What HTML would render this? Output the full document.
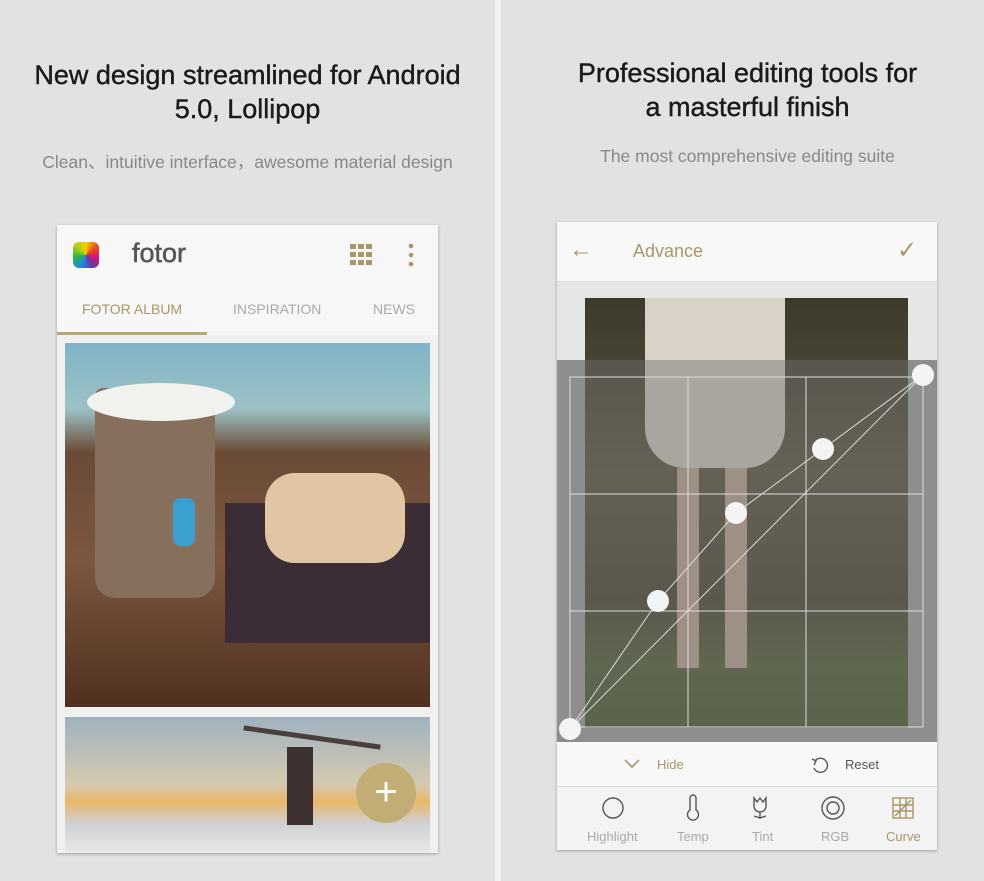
<!DOCTYPE html>
<html><head><style>
body{margin:0;width:984px;height:881px;background:#e2e2e2;font-family:"Liberation Sans",sans-serif;position:relative;overflow:hidden}
.a{position:absolute}
h1{margin:0;font-size:27px;font-weight:normal;color:#1a1a1a;text-align:center;line-height:34px;-webkit-text-stroke:.4px #1a1a1a}
.sub{font-size:17.5px;color:#888;text-align:center}
</style></head><body>
<div class="a" style="left:495px;top:0;width:6px;height:881px;background:#f4f4f4"></div>
<h1 class="a" style="left:0;width:495px;top:58px">New design streamlined for Android<br>5.0, Lollipop</h1>
<div class="a sub" style="left:0;width:495px;top:149px">Clean、intuitive interface，awesome material design</div>
<h1 class="a" style="left:500px;width:495px;top:56px">Professional editing tools for<br>a masterful finish</h1>
<div class="a sub" style="left:500px;width:495px;top:146px">The most comprehensive editing suite</div>

<!-- left phone -->
<div class="a" style="left:57px;top:225px;width:381px;height:628px;background:#f0f0f0;box-shadow:0 1px 3px rgba(0,0,0,.3)">
 <div class="a" style="left:0;top:0;width:381px;height:110px;background:#f7f7f7"></div>
 <div class="a" style="left:16px;top:17px;width:26px;height:26px;border-radius:6px;background:conic-gradient(#f5d000,#e94b1c,#d9127d,#5b3fa6,#1f8ae0,#25b34a,#a7cf1b,#f5d000)"></div>
 <div class="a" style="left:75px;top:13px;font-size:27px;color:#555;-webkit-text-stroke:.5px #555">fotor</div>
 <svg class="a" style="left:293px;top:19px" width="24" height="22"><g fill="#a99668"><rect x="0" y="0" width="6" height="5"/><rect x="8" y="0" width="6" height="5"/><rect x="16" y="0" width="6" height="5"/><rect x="0" y="8" width="6" height="5"/><rect x="8" y="8" width="6" height="5"/><rect x="16" y="8" width="6" height="5"/><rect x="0" y="16" width="6" height="5"/><rect x="8" y="16" width="6" height="5"/><rect x="16" y="16" width="6" height="5"/></g></svg>
 <svg class="a" style="left:351px;top:18px" width="6" height="24"><g fill="#a99668"><circle cx="3" cy="3" r="2.3"/><circle cx="3" cy="12" r="2.3"/><circle cx="3" cy="21" r="2.3"/></g></svg>
 <div class="a" style="left:25px;top:76px;font-size:14px;color:#a99668">FOTOR ALBUM</div>
 <div class="a" style="left:176px;top:76px;font-size:14px;color:#aaa">INSPIRATION</div>
 <div class="a" style="left:316px;top:76px;font-size:14px;color:#aaa">NEWS</div>
 <div class="a" style="left:0;top:107px;width:150px;height:3px;background:#b8a677"></div>
 <div class="a" style="left:8px;top:118px;width:365px;height:364px;background:linear-gradient(180deg,#7fb4c6 0%,#9cc2c6 18%,#6b4b37 30%,#7b573e 60%,#4f3020 100%)">
  <div class="a" style="left:30px;top:45px;width:120px;height:210px;background:#86705d;border-radius:8px 8px 20px 20px"></div>
  <div class="a" style="left:22px;top:40px;width:148px;height:38px;background:#f1f1ee;border-radius:50%"></div>
  <div class="a" style="left:108px;top:155px;width:22px;height:48px;background:#3aa0cf;border-radius:8px"></div>
  <div class="a" style="left:160px;top:160px;width:205px;height:140px;background:#3c2c35"></div>
  <div class="a" style="left:200px;top:130px;width:140px;height:90px;background:#e0c6a2;border-radius:30px"></div>
 </div>
 <div class="a" style="left:8px;top:492px;width:365px;height:136px;background:linear-gradient(180deg,#9fb2c0 0%,#d6c9b0 50%,#e9b768 62%,#cfd0d2 78%,#e8e8e8 100%)">
  <div class="a" style="left:222px;top:30px;width:26px;height:78px;background:#3c3130"></div>
  <div class="a" style="left:178px;top:18px;width:138px;height:5px;background:#4a3f3b;transform:rotate(8deg)"></div>
  <div class="a" style="left:291px;top:46px;width:60px;height:60px;border-radius:50%;background:#c2ad75;color:#fff;font-size:40px;line-height:58px;text-align:center">+</div>
 </div>
</div>

<!-- right phone -->
<div class="a" style="left:557px;top:222px;width:380px;height:628px;background:#f3f3f3;box-shadow:0 1px 3px rgba(0,0,0,.3)">
 <div class="a" style="left:0;top:0;width:380px;height:59px;background:#f8f8f8;border-bottom:1px solid #ddd"></div>
 <div class="a" style="left:12px;top:14px;font-size:24px;color:#a99668">←</div>
 <div class="a" style="left:76px;top:19px;font-size:18px;color:#a99668">Advance</div>
 <div class="a" style="left:340px;top:14px;font-size:24px;color:#a99668">✓</div>
 <div class="a" style="left:0;top:60px;width:380px;height:460px;background:#e6e6e6"></div>
 <div class="a" style="left:28px;top:76px;width:323px;height:430px;background:linear-gradient(180deg,#3d3a2c 0%,#5c5640 40%,#4a4631 70%,#536238 85%,#4a5a30 100%)">
  <div class="a" style="left:60px;top:0;width:140px;height:170px;background:#d9d3c7;border-radius:0 0 40px 40px"></div>
  <div class="a" style="left:92px;top:170px;width:22px;height:200px;background:#c7ab98"></div>
  <div class="a" style="left:140px;top:170px;width:22px;height:200px;background:#c7ab98"></div>
 </div>
 <div class="a" style="left:0;top:138px;width:380px;height:382px;background:rgba(110,110,110,.45)"></div>
 <div class="a" style="left:0;top:138px;width:28px;height:382px;background:#8e8e8e"></div>
 <div class="a" style="left:351px;top:138px;width:29px;height:382px;background:#8e8e8e"></div>
 <div class="a" style="left:0;top:506px;width:380px;height:14px;background:#8e8e8e"></div>
 <svg class="a" style="left:0;top:138px" width="380" height="382">
  <g stroke="#ddd" stroke-width="1" fill="none">
   <rect x="13" y="17" width="353" height="350"/>
   <line x1="131" y1="17" x2="131" y2="367"/><line x1="249" y1="17" x2="249" y2="367"/>
   <line x1="13" y1="134" x2="366" y2="134"/><line x1="13" y1="251" x2="366" y2="251"/>
   <polyline points="13,369 101,241 179,153 266,89 366,15"/>
   <line x1="13" y1="369" x2="366" y2="15"/>
  </g>
  <g fill="#f4f4f4"><circle cx="13" cy="369" r="11"/><circle cx="101" cy="241" r="11"/><circle cx="179" cy="153" r="11"/><circle cx="266" cy="89" r="11"/><circle cx="366" cy="15" r="11"/></g>
 </svg>
 <div class="a" style="left:0;top:520px;width:380px;height:44px;background:#f8f8f8;border-bottom:1px solid #ddd"></div>
 <svg class="a" style="left:67px;top:537px" width="16" height="10"><polyline points="1,1 8,8 15,1" stroke="#a99668" stroke-width="1.6" fill="none"/></svg>
 <div class="a" style="left:100px;top:535px;font-size:13px;color:#a99668">Hide</div>
 <svg class="a" style="left:253px;top:533px" width="20" height="20"><path d="M5 6 A7 7 0 1 1 4 13" stroke="#555" stroke-width="1.4" fill="none"/><path d="M2 4 L6 6 L4 10" stroke="#555" stroke-width="1.4" fill="none"/></svg>
 <div class="a" style="left:288px;top:535px;font-size:13px;color:#555">Reset</div>
 <svg class="a" style="left:0;top:572px" width="380" height="30" fill="none" stroke="#555" stroke-width="1.4">
  <circle cx="56" cy="14" r="10"/>
  <path d="M133 4 a3 3 0 0 1 6 0 v12 a5.5 5.5 0 1 1 -6 0z"/>
  <path d="M197 4 l3 4 l3 -4 l3 4 l3 -4 v8 a6 6 0 0 1 -12 0z M203 18 v6 M197 22 l6 2 l6 -2"/>
  <circle cx="276" cy="14" r="11"/><circle cx="276" cy="14" r="6"/>
  <g stroke="#a99668"><rect x="336" y="4" width="20" height="20"/><path d="M336 11h20M336 17h20M343 4v20M349 4v20M338 22l16 -16"/></g>
 </svg>
 <div class="a" style="left:30px;top:607px;font-size:13px;color:#aaa">Highlight</div>
 <div class="a" style="left:120px;top:607px;font-size:13px;color:#aaa">Temp</div>
 <div class="a" style="left:195px;top:607px;font-size:13px;color:#aaa">Tint</div>
 <div class="a" style="left:264px;top:607px;font-size:13px;color:#aaa">RGB</div>
 <div class="a" style="left:329px;top:607px;font-size:13px;color:#a99668">Curve</div>
</div>
</body></html>
